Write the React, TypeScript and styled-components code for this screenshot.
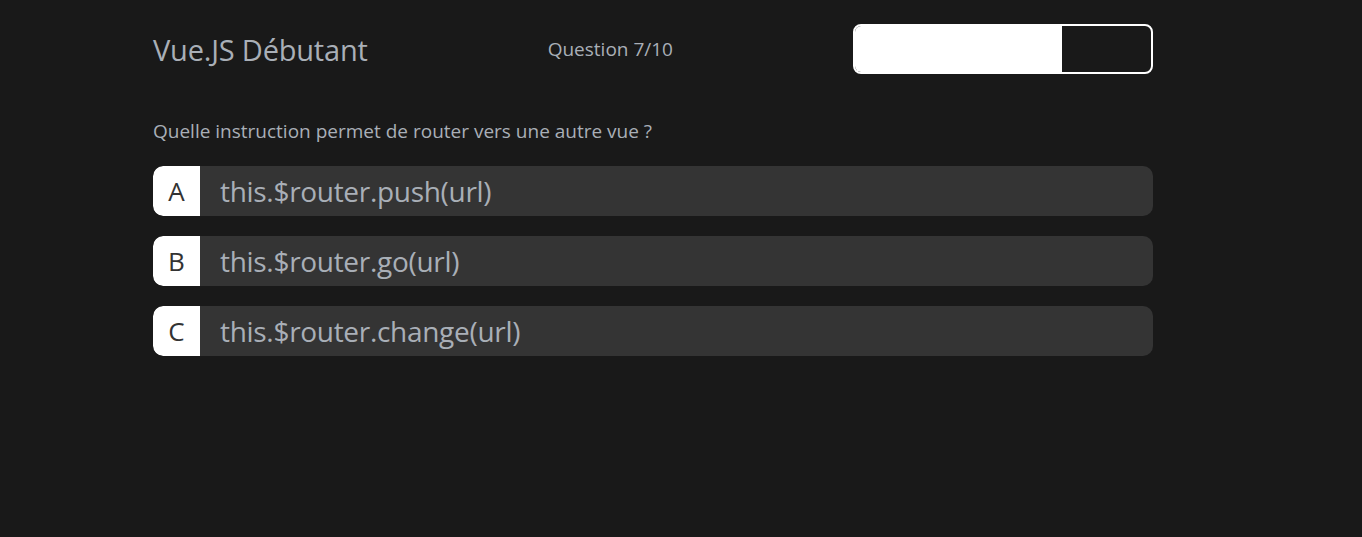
import React from "react";
import styled, { createGlobalStyle } from "styled-components";

const Global = createGlobalStyle`
  html, body { margin: 0; padding: 0; background: #191919; }
  body { font-family: "Open Sans", "Noto Sans", sans-serif; }
`;

const Page = styled.div`
  width: 1000px;
  margin-left: 153px;
  padding-top: 24px;
  box-sizing: border-box;
  min-height: 537px;
`;

const Header = styled.header`
  display: flex;
  align-items: center;
  justify-content: space-between;
  height: 50px;
`;

const Title = styled.h1`
  margin: 0;
  font-weight: 400;
  font-size: 29px;
  color: #a9afb7;
  letter-spacing: -0.2px;
`;

const Counter = styled.div`
  font-size: 19px;
  color: #a9afb7;
`;

const Bar = styled.div`
  width: 300px;
  height: 50px;
  box-sizing: border-box;
  border: 2px solid #ffffff;
  border-radius: 8px;
  overflow: hidden;
  display: flex;
`;

const Fill = styled.div<{ $pct: number }>`
  width: ${(p) => p.$pct}%;
  background: #ffffff;
`;

const Question = styled.p`
  margin: 45px 0 0;
  font-size: 19px;
  color: #a9afb7;
  line-height: 24px;
`;

const Answers = styled.div`
  display: flex;
  flex-direction: column;
  gap: 20px;
  margin-top: 23px;
`;

const Answer = styled.div`
  display: flex;
  align-items: center;
  height: 50px;
  background: #343434;
  border-radius: 10px;
  overflow: hidden;
`;

const Letter = styled.span`
  width: 47px;
  height: 100%;
  background: #ffffff;
  color: #333;
  font-size: 26px;
  display: flex;
  align-items: center;
  justify-content: center;
  border-radius: 10px 0 0 10px;
`;

const Label = styled.span`
  margin-left: 20px;
  font-size: 28px;
  color: #a9afb7;
  letter-spacing: -0.3px;
`;

const answers = [
  ["A", "this.$router.push(url)"],
  ["B", "this.$router.go(url)"],
  ["C", "this.$router.change(url)"],
];

export default function App() {
  return (
    <>
      <Global />
      <Page>
        <Header>
          <Title>Vue.JS Débutant</Title>
          <Counter>Question 7/10</Counter>
          <Bar>
            <Fill $pct={70} />
          </Bar>
        </Header>
        <Question>Quelle instruction permet de router vers une autre vue ?</Question>
        <Answers>
          {answers.map(([l, t]) => (
            <Answer key={l}>
              <Letter>{l}</Letter>
              <Label>{t}</Label>
            </Answer>
          ))}
        </Answers>
      </Page>
    </>
  );
}
